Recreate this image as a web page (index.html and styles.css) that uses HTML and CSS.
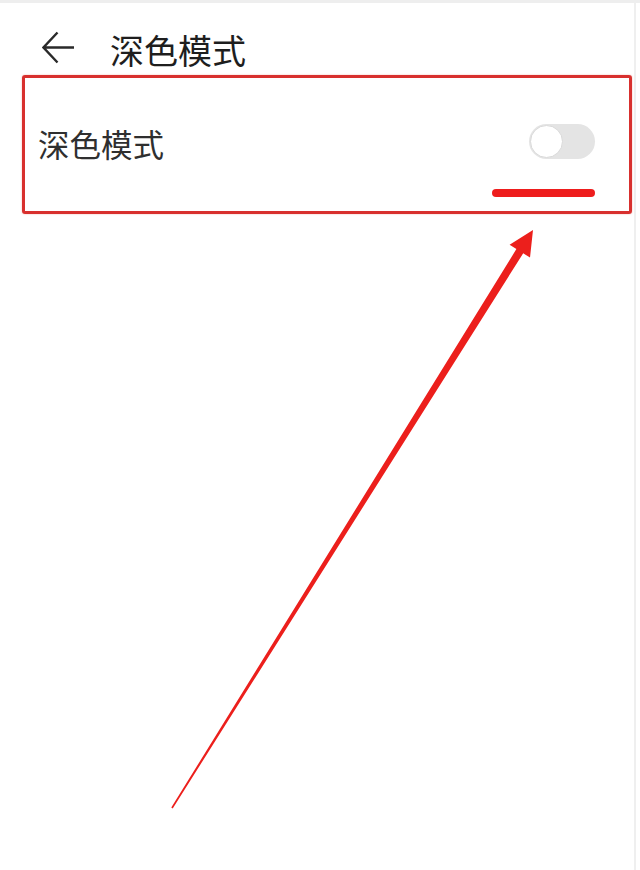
FILE: index.html
```html
<!DOCTYPE html>
<html lang="zh">
<head>
<meta charset="utf-8">
<link rel="stylesheet" href="styles.css">
</head>
<body>
<div class="page">
  <header class="header">
    <svg class="back" width="33" height="33" viewBox="0 0 33 33">
      <path d="M15.5 1.5 L1.5 16.5 L15.5 31.5 M1.5 16.5 H32" fill="none" stroke="#2a2a2a" stroke-width="2.4" stroke-linejoin="miter"/>
    </svg>
    <h1 class="title">深色模式</h1>
  </header>
  <section class="box">
    <div class="row">
      <span class="label">深色模式</span>
      <span class="switch"><span class="knob"></span></span>
    </div>
    <div class="mark-row"><span class="mark"></span></div>
  </section>
  <svg class="arrow" width="640" height="870" viewBox="0 0 640 870">
    <polygon points="172.7,808.4 523.2,253.3 530,257.6 533,230 509.6,244.8 516.4,249.1 171.3,807.6" fill="#ec1f1c"/>
  </svg>
</div>
</body>
</html>
```
FILE: styles.css
```css
html, body {
  margin: 0;
  padding: 0;
  background: #ffffff;
}
.page {
  position: relative;
  width: 640px;
  height: 870px;
  box-sizing: border-box;
  border-top: 3px solid #eeeeee;
  overflow: hidden;
  font-family: "Noto Sans CJK SC", "Noto Sans", sans-serif;
}
.page::after {
  content: "";
  position: absolute;
  top: 0;
  right: 4px;
  width: 2px;
  height: 100%;
  background: #efefef;
}
.header {
  display: flex;
  align-items: center;
  height: 72px;
  padding: 22px 0 0 42px;
  box-sizing: border-box;
}
.back {
  display: block;
  margin-top: -5px;
}
.title {
  margin: 0 0 0 35px;
  font-size: 34px;
  font-weight: 400;
  color: #1e1e1e;
  line-height: 1;
}
.box {
  margin-left: 22px;
  width: 610px;
  height: 139px;
  box-sizing: border-box;
  border: 3.5px solid #d8302e;
  border-radius: 3px;
  box-shadow: 0 0 1.5px rgba(230, 60, 40, 0.5);
  display: flex;
  flex-direction: column;
}
.row {
  display: flex;
  align-items: center;
  justify-content: space-between;
  padding: 50px 34px 0 13px;
}
.label {
  font-size: 31.5px;
  color: #2f2f2f;
  line-height: 1;
}
.switch {
  position: relative;
  display: block;
  width: 66px;
  height: 35px;
  border-radius: 18px;
  background: #e4e4e4;
  margin-top: -4px;
}
.knob {
  position: absolute;
  left: 1px;
  top: 1px;
  width: 31px;
  height: 31px;
  border-radius: 50%;
  background: #ffffff;
  border: 1px solid #d9d9d9;
}
.mark-row {
  display: flex;
  justify-content: flex-end;
  padding: 29px 34px 0 0;
}
.mark {
  display: block;
  width: 103px;
  height: 8px;
  border-radius: 4px;
  background: #ee1d1d;
}
.arrow {
  position: absolute;
  left: 0;
  top: -3px;
}
```
